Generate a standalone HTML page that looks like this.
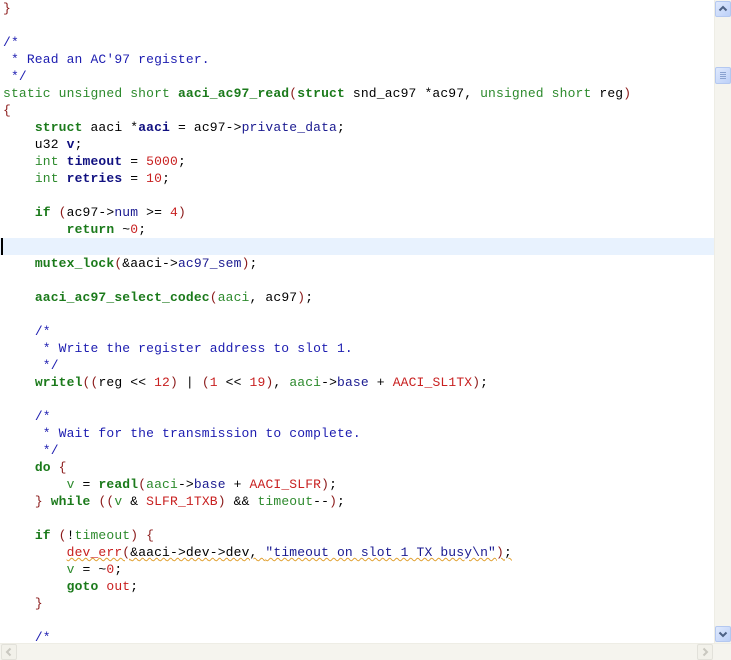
<!DOCTYPE html>
<html><head><meta charset="utf-8"><style>
html,body{margin:0;padding:0;background:#fff;width:731px;height:660px;overflow:hidden;position:relative}
#code{position:absolute;left:0;top:0;width:714px;height:643px;overflow:hidden}
.l{height:17px;line-height:17px;white-space:pre;font-family:"Liberation Mono","Courier New",monospace;font-size:13px;letter-spacing:0.15px;padding-left:3px;color:#000}
.hl{background:#e8f2fe;position:relative}
.hl:before{content:"";position:absolute;left:1px;top:0;width:2px;height:17px;background:#000}
.k{color:#1b7a1b;font-weight:bold}
.t{color:#2d8a2d}
.b{color:#101080;font-weight:bold}
.p{color:#8b1a1a}
.n{color:#c82020}
.c{color:#1c1cb0}
.m{color:#1a1a90}
.s{color:#1a1a90}
.sq{text-decoration:underline wavy #e0a030;text-decoration-thickness:1px}
#vs{position:absolute;left:714px;top:0;width:17px;height:643px;background:#f5f4ee;border-left:1px solid #eeede5;box-sizing:border-box}
#hs{position:absolute;left:0;top:643px;width:731px;height:17px;background:#f5f4ee;border-top:1px solid #eeede5;box-sizing:border-box}
.btn{position:absolute;width:16px;height:16px;box-sizing:border-box;border:1px solid #b4c8f0;border-radius:2px;background:linear-gradient(135deg,#dfe9fd,#bcd0f8)}
.btn svg{position:absolute;left:0;top:0}
.dis{border-color:#e2e1da;background:#f2f1ea}
</style></head><body>
<div id="code">
<div class="l"><span class="p">}</span></div>
<div class="l"> </div>
<div class="l"><span class="c">/*</span></div>
<div class="l"><span class="c"> * Read an AC'97 register.</span></div>
<div class="l"><span class="c"> */</span></div>
<div class="l"><span class="t">static unsigned short</span> <span class="k">aaci_ac97_read</span><span class="p">(</span><span class="k">struct</span> snd_ac97 *ac97, <span class="t">unsigned short</span> reg<span class="p">)</span></div>
<div class="l"><span class="p">{</span></div>
<div class="l">    <span class="k">struct</span> aaci *<span class="b">aaci</span> = ac97-&gt;<span class="m">private_data</span>;</div>
<div class="l">    u32 <span class="b">v</span>;</div>
<div class="l">    <span class="t">int</span> <span class="b">timeout</span> = <span class="n">5000</span>;</div>
<div class="l">    <span class="t">int</span> <span class="b">retries</span> = <span class="n">10</span>;</div>
<div class="l"> </div>
<div class="l">    <span class="k">if</span> <span class="p">(</span>ac97-&gt;<span class="m">num</span> &gt;= <span class="n">4</span><span class="p">)</span></div>
<div class="l">        <span class="k">return</span> ~<span class="n">0</span>;</div>
<div class="l hl"> </div>
<div class="l">    <span class="k">mutex_lock</span><span class="p">(</span>&amp;aaci-&gt;<span class="m">ac97_sem</span><span class="p">)</span>;</div>
<div class="l"> </div>
<div class="l">    <span class="k">aaci_ac97_select_codec</span><span class="p">(</span><span class="t">aaci</span>, ac97<span class="p">)</span>;</div>
<div class="l"> </div>
<div class="l">    <span class="c">/*</span></div>
<div class="l"><span class="c">     * Write the register address to slot 1.</span></div>
<div class="l"><span class="c">     */</span></div>
<div class="l">    <span class="k">writel</span><span class="p">(</span><span class="p">(</span>reg &lt;&lt; <span class="n">12</span><span class="p">)</span> | <span class="p">(</span><span class="n">1</span> &lt;&lt; <span class="n">19</span><span class="p">)</span>, <span class="t">aaci</span>-&gt;<span class="m">base</span> + <span class="n">AACI_SL1TX</span><span class="p">)</span>;</div>
<div class="l"> </div>
<div class="l">    <span class="c">/*</span></div>
<div class="l"><span class="c">     * Wait for the transmission to complete.</span></div>
<div class="l"><span class="c">     */</span></div>
<div class="l">    <span class="k">do</span> <span class="p">{</span></div>
<div class="l">        <span class="t">v</span> = <span class="k">readl</span><span class="p">(</span><span class="t">aaci</span>-&gt;<span class="m">base</span> + <span class="n">AACI_SLFR</span><span class="p">)</span>;</div>
<div class="l">    <span class="p">}</span> <span class="k">while</span> <span class="p">(</span><span class="p">(</span><span class="t">v</span> &amp; <span class="n">SLFR_1TXB</span><span class="p">)</span> &amp;&amp; <span class="t">timeout</span>--<span class="p">)</span>;</div>
<div class="l"> </div>
<div class="l">    <span class="k">if</span> <span class="p">(</span>!<span class="t">timeout</span><span class="p">)</span> <span class="p">{</span></div>
<div class="l">        <span class="sq"><span class="n">dev_err</span><span class="p">(</span>&amp;aaci-&gt;dev-&gt;dev, <span class="s">"timeout on slot 1 TX busy\n"</span><span class="p">)</span>;</span></div>
<div class="l">        <span class="t">v</span> = ~<span class="n">0</span>;</div>
<div class="l">        <span class="k">goto</span> <span class="n">out</span>;</div>
<div class="l">    <span class="p">}</span></div>
<div class="l"> </div>
<div class="l">    <span class="c">/*</span></div>
</div>
<div id="vs">
  <div class="btn" style="left:0;top:1px"><svg width="14" height="14"><path d="M3.5 8.5 L7 5 L10.5 8.5" fill="none" stroke="#4d6185" stroke-width="2"/></svg></div>
  <div class="btn" style="left:0;top:67px;height:17px"><svg width="14" height="15"><path d="M4 4.5h6M4 6.5h6M4 8.5h6M4 10.5h6" stroke="#8aa2d0" stroke-width="1"/></svg></div>
  <div class="btn" style="left:0;top:626px"><svg width="14" height="14"><path d="M3.5 5.5 L7 9 L10.5 5.5" fill="none" stroke="#4d6185" stroke-width="2"/></svg></div>
</div>
<div id="hs">
  <div class="btn dis" style="left:1px;top:0"><svg width="14" height="14"><path d="M8.5 3.5 L5 7 L8.5 10.5" fill="none" stroke="#c9c8c0" stroke-width="2"/></svg></div>
  <div class="btn dis" style="left:697px;top:0"><svg width="14" height="14"><path d="M5.5 3.5 L9 7 L5.5 10.5" fill="none" stroke="#c9c8c0" stroke-width="2"/></svg></div>
</div>
</body></html>
